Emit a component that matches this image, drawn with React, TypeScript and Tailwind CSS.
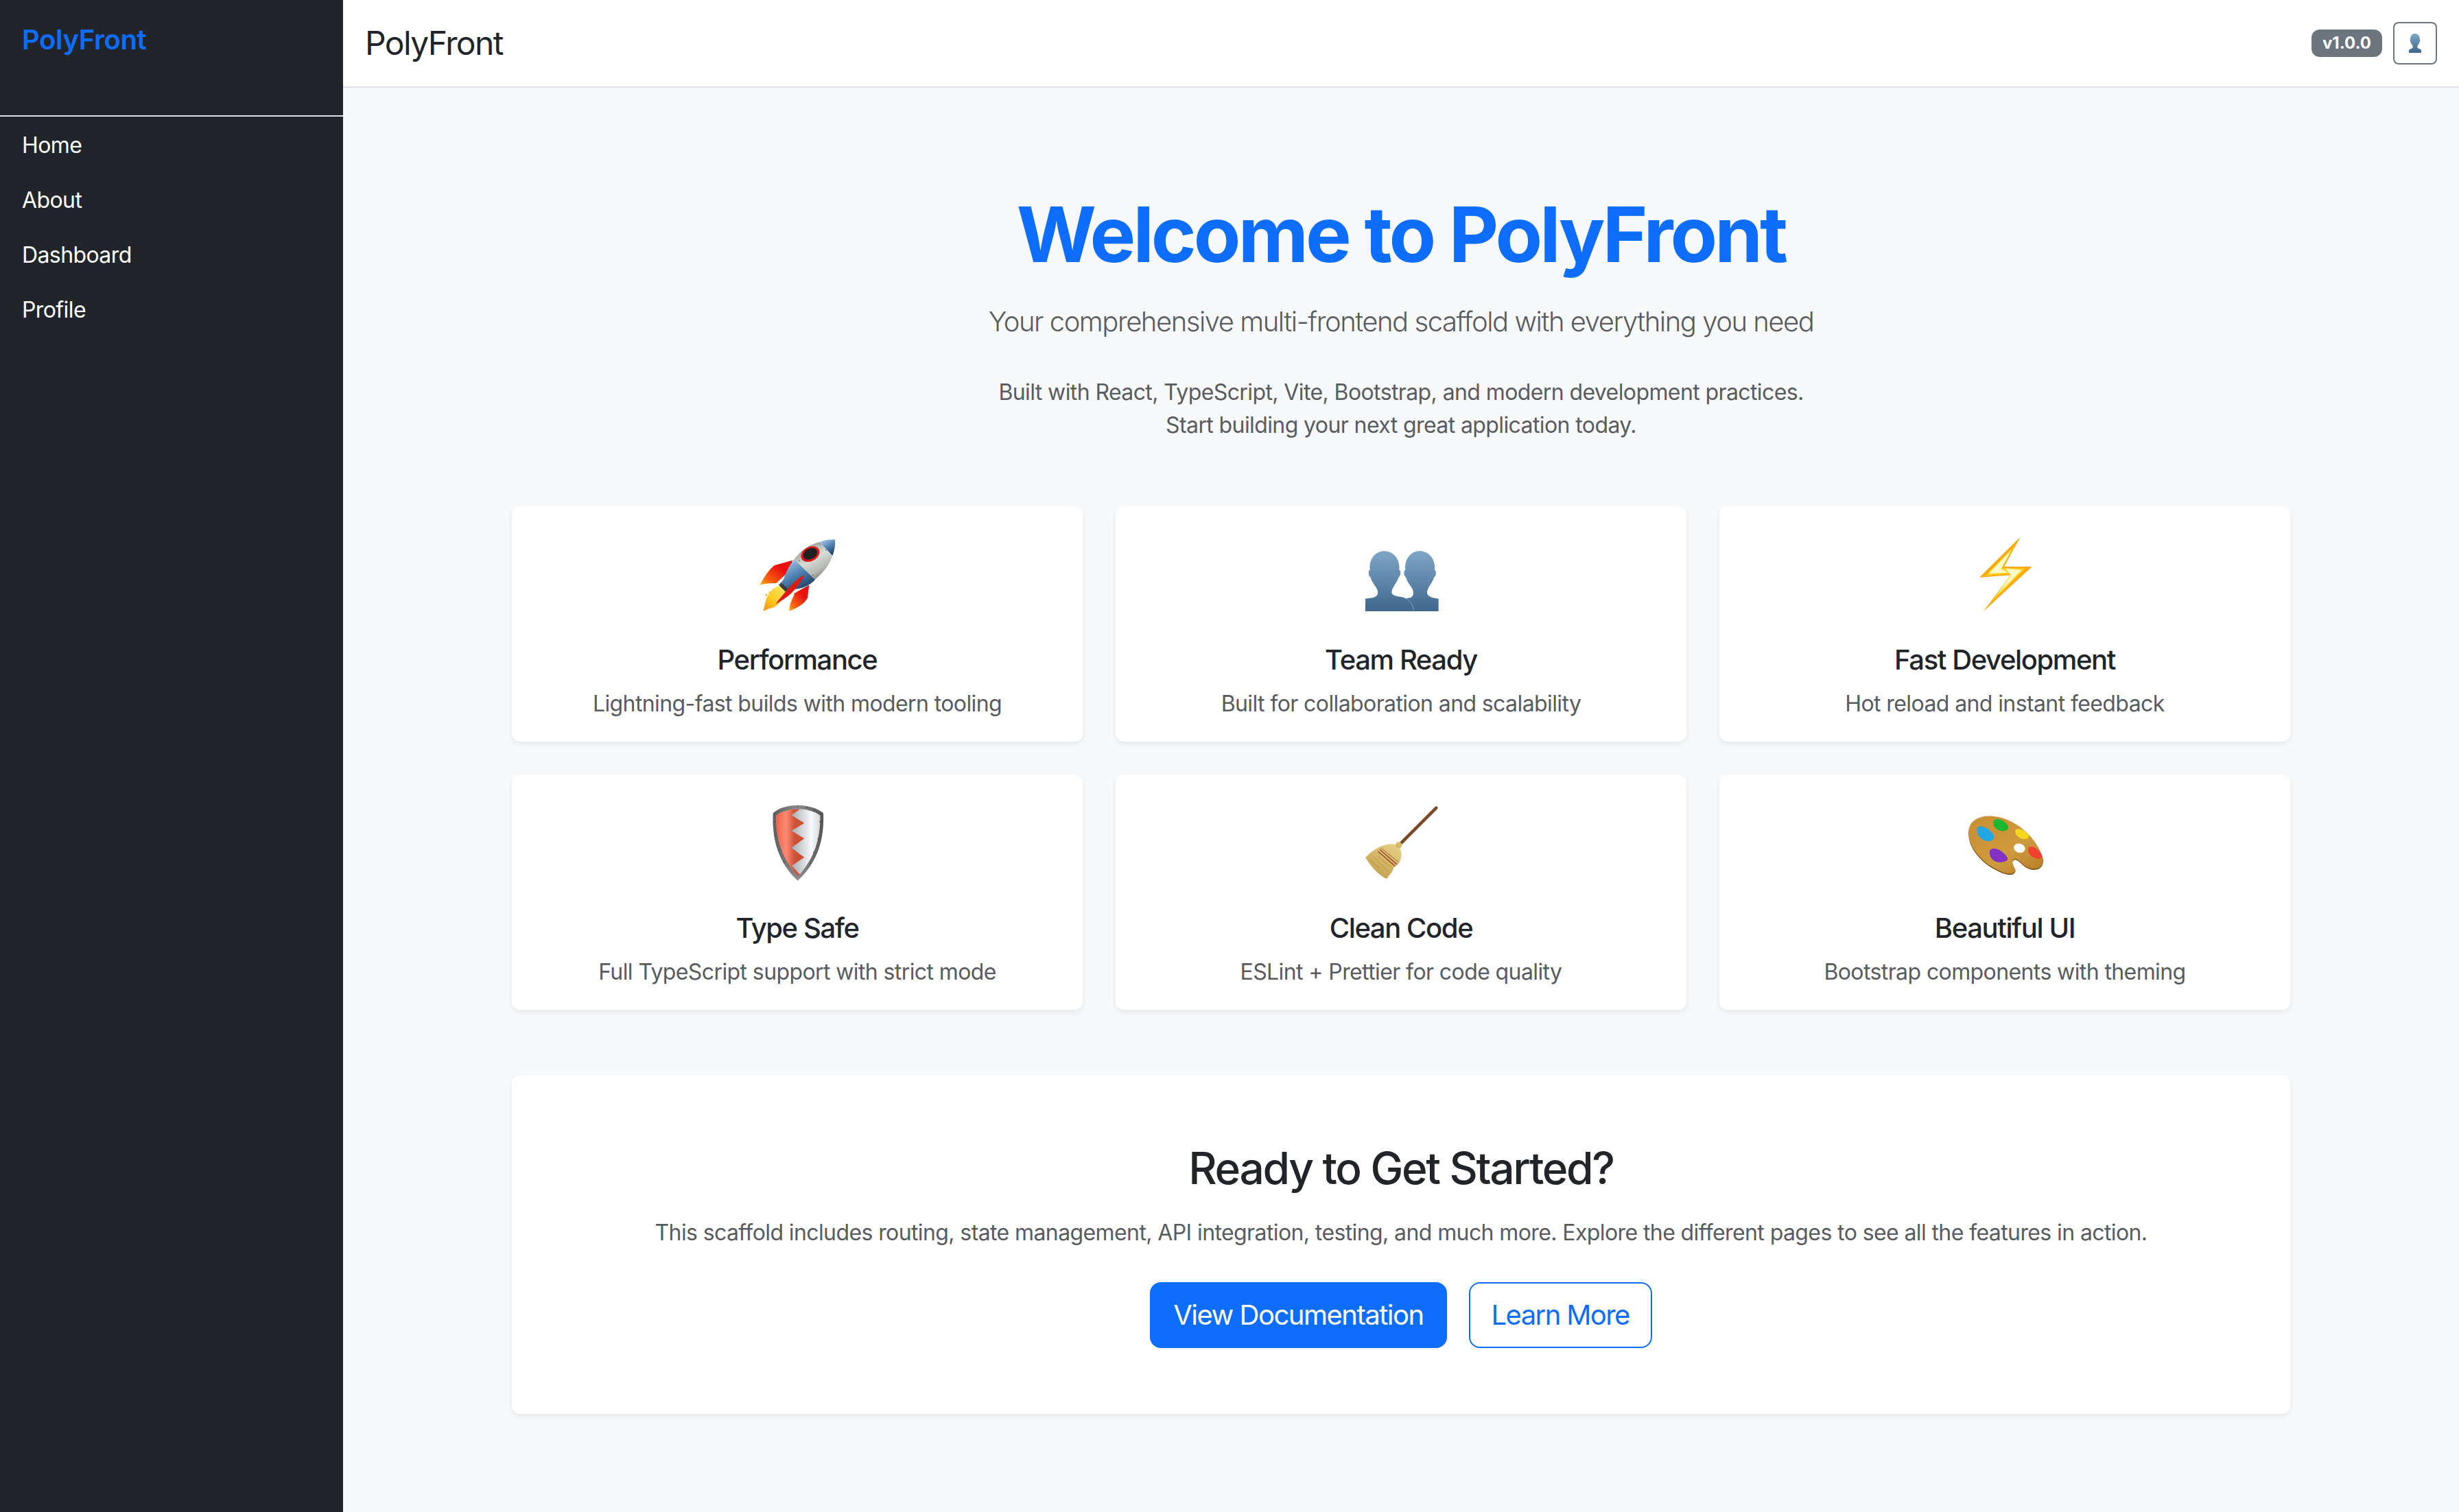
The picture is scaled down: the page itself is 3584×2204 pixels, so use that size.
import React from "react";

const bustA = "M177 393V338C205 335 232 335 232 310C232 290 205 270 200 245C190 240 188 215 197 212C192 160 225 130 260 130C295 130 330 160 325 212C334 215 332 240 322 245C315 270 292 290 292 310C292 330 335 328 350 335C375 345 388 370 388 393Z";
const bustB = "M345 393V338C375 335 387 335 387 310C387 290 360 270 355 245C345 240 343 215 352 212C347 160 380 130 415 130C450 130 485 160 480 212C489 215 487 240 477 245C470 270 447 290 447 310C447 330 470 335 497 338V393Z";

function Icon({ x, children }: { x: number; children: React.ReactNode }) {
  return (
    <svg className="block mx-auto w-[200px] h-[150px]" viewBox={`${x} 0 600 450`}>
      {children}
    </svg>
  );
}

const Rocket = () => (
  <Icon x={33}>
    <defs>
      <linearGradient id="rfin" x1="1" y1="0" x2="0" y2="1"><stop offset="0.35" stopColor="#e8110f" /><stop offset="0.8" stopColor="#fb6a10" /><stop offset="1" stopColor="#fdb515" /></linearGradient>
      <linearGradient id="rsil" x1="0.2" y1="0" x2="0.8" y2="1"><stop offset="0" stopColor="#83857f" /><stop offset="0.45" stopColor="#dadcd8" /><stop offset="0.75" stopColor="#b5b7b3" /><stop offset="1" stopColor="#60625f" /></linearGradient>
      <linearGradient id="rblu" x1="0.2" y1="0" x2="0.8" y2="1"><stop offset="0" stopColor="#a9cbe9" /><stop offset="0.5" stopColor="#4d7fb0" /><stop offset="1" stopColor="#1b3a5a" /></linearGradient>
      <linearGradient id="rfl" x1="1" y1="0" x2="0" y2="1"><stop offset="0" stopColor="#fff07a" /><stop offset="0.6" stopColor="#fdc91f" /><stop offset="1" stopColor="#f98c12" /></linearGradient>
    </defs>
    <path d="M312 170L232 193C205 215 185 250 170 278C205 268 225 272 242 270L300 215Z" fill="url(#rfin)" />
    <path d="M385 278L318 316C325 325 300 345 298 392C330 380 360 365 378 335Z" fill="url(#rfin)" />
    <path d="M262 282C235 285 215 300 205 325C192 345 192 370 184 393C205 380 235 380 252 360C265 345 290 320 298 298Z" fill="url(#rfl)" />
    <circle cx="198" cy="322" r="4" fill="#f9a215" /><circle cx="212" cy="310" r="3" fill="#f9a215" />
    <path d="M320 165C305 185 285 215 274 252L262 268C270 285 285 300 300 296C340 300 385 285 412 254Z" fill="url(#rblu)" />
    <path d="M262 268L252 278L282 308L294 296Z" fill="#3b3d3c" />
    <path d="M320 165C350 125 390 100 430 90L487 150C475 190 445 225 410 255Z" fill="url(#rsil)" />
    <path d="M430 90C455 80 480 78 498 80C500 105 495 130 487 150Z" fill="url(#rblu)" />
    <ellipse cx="390" cy="143" rx="43" ry="31" transform="rotate(-28 390 143)" fill="#d81818" />
    <ellipse cx="390" cy="142" rx="33" ry="23" transform="rotate(-28 390 142)" fill="#1f2022" />
    <path d="M365 235C345 240 300 280 238 362C270 345 300 325 325 295C340 275 355 255 365 235Z" fill="#de1a12" />
    <circle cx="342" cy="172" r="3" fill="#777" /><circle cx="432" cy="99" r="3" fill="#777" /><circle cx="458" cy="126" r="3" fill="#777" /><circle cx="402" cy="235" r="3" fill="#777" />
  </Icon>
);

const Team = () => (
  <Icon x={33}>
    <defs>
      <linearGradient id="bust" x1="0" y1="0" x2="0" y2="1"><stop offset="0" stopColor="#7ea6c6" /><stop offset="1" stopColor="#40678c" /></linearGradient>
    </defs>
    <path d={bustB} fill="url(#bust)" />
    <path d={bustA} fill="url(#bust)" />
    <path d="M350 335C375 345 388 370 388 393" fill="none" stroke="#9cc3dd" strokeWidth="2" />
  </Icon>
);

const Bolt = () => (
  <Icon x={3}>
    <path d="M372 67L192 245L330 235L208 395L422 198L300 198Z" fill="#fba90f" />
    <path d="M345 108L218 238L332 228L248 350L392 206L290 205Z" fill="#ffd21e" />
    <path d="M332 125L232 228L318 224L287 208Z" fill="#fffbc8" />
    <path d="M306 206L376 212L272 318L330 236Z" fill="#fffbc8" />
  </Icon>
);

const Shield = () => (
  <Icon x={33}>
    <defs>
      <linearGradient id="sred" x1="0" y1="0" x2="1" y2="0"><stop offset="0" stopColor="#ef6248" /><stop offset="0.35" stopColor="#fb8a75" /><stop offset="0.65" stopColor="#cf5237" /><stop offset="1" stopColor="#ca4f34" /></linearGradient>
      <linearGradient id="swht" x1="0" y1="0" x2="1" y2="0"><stop offset="0.35" stopColor="#a9acae" /><stop offset="0.8" stopColor="#f7f9fb" /><stop offset="1" stopColor="#d5d8da" /></linearGradient>
      <linearGradient id="sedg" x1="0" y1="0" x2="1" y2="0"><stop offset="0" stopColor="#5f5f5f" /><stop offset="0.5" stopColor="#8c8c8c" /><stop offset="1" stopColor="#555" /></linearGradient>
    </defs>
    <path d="M335 68C375 68 420 80 447 103C452 220 420 320 335 398C250 320 222 220 227 103C250 80 295 68 335 68Z" fill="url(#sedg)" />
    <path d="M337 85C370 85 410 95 433 113C436 215 405 305 337 378C268 305 238 215 241 113C265 95 305 85 337 85Z" fill="url(#swht)" />
    <path d="M345 85L308 112L364 146L308 180L364 214L307 254L364 296L309 333L345 372L337 378C268 305 238 215 241 113C265 95 305 85 345 85Z" fill="url(#sred)" />
    {[[232, 140], [238, 200], [252, 262], [276, 318], [432, 140], [440, 100], [424, 215], [405, 275], [392, 320], [335, 75], [375, 78], [405, 92]].map(([a, b]) => (
      <circle key={`${a}-${b}`} cx={a} cy={b} r="2.5" fill="#444" />
    ))}
  </Icon>
);

const Broom = () => (
  <Icon x={33}>
    <defs>
      <linearGradient id="straw" x1="0.8" y1="0" x2="0.2" y2="1"><stop offset="0" stopColor="#e8cf85" /><stop offset="1" stopColor="#c09c47" /></linearGradient>
    </defs>
    <line x1="487" y1="80" x2="335" y2="232" stroke="#7a4a28" strokeWidth="14" strokeLinecap="round" />
    <path d="M178 298C200 270 250 235 300 238C325 240 338 265 334 295C330 320 315 335 302 340C295 365 280 375 270 390C245 380 205 345 178 298Z" fill="url(#straw)" />
    <circle cx="323" cy="243" r="14" fill="#d8bb66" />
    <path d="M240 262L314 326M232 270L306 334" stroke="#8e3f25" strokeWidth="4" fill="none" />
    <path d="M246 255L320 316" stroke="#8e3f25" strokeWidth="3" fill="none" opacity="0.7" />
    <path d="M200 310L240 345M215 295L270 350M230 290L290 340" stroke="#a5842f" strokeWidth="2" fill="none" />
  </Icon>
);

const Palette = () => (
  <Icon x={3}>
    <defs>
      <linearGradient id="wood" x1="0" y1="0" x2="1" y2="1"><stop offset="0" stopColor="#c98f34" /><stop offset="0.6" stopColor="#cf9a3d" /><stop offset="1" stopColor="#b57c24" /></linearGradient>
    </defs>
    <path d="M145 180C150 135 190 112 250 116C340 122 440 200 470 300C475 335 450 350 420 345C385 340 375 310 350 302C325 305 340 335 350 350C345 375 310 372 270 350C200 315 140 250 145 180Z" fill="#7b5218" transform="translate(0 5)" />
    <path d="M145 180C150 135 190 112 250 116C340 122 440 200 470 300C475 335 450 350 420 345C385 340 375 310 350 302C325 305 340 335 350 350C345 375 310 372 270 350C200 315 140 250 145 180Z" fill="url(#wood)" />
    <ellipse cx="367" cy="256" rx="25" ry="20" transform="rotate(15 367 256)" fill="#fff" />
    <path d="M183 168C190 150 225 165 245 185C265 205 255 230 225 225C195 220 178 195 183 168Z" fill="#22a7e4" />
    <path d="M255 135C270 120 305 135 318 160C320 185 290 185 270 175C255 165 250 150 255 135Z" fill="#19b82e" />
    <path d="M350 175C365 165 395 180 408 200C410 220 385 218 370 212C355 205 345 190 350 175Z" fill="#f7d61e" />
    <path d="M407 255C420 240 450 260 465 285C470 310 440 305 425 295C410 285 402 270 407 255Z" fill="#ee4131" />
    <path d="M238 265C250 250 285 260 305 285C325 305 315 315 285 318C255 320 230 295 238 265Z" fill="#8231c4" />
  </Icon>
);

const features = [
  { icon: <Rocket />, title: "Performance", desc: "Lightning-fast builds with modern tooling" },
  { icon: <Team />, title: "Team Ready", desc: "Built for collaboration and scalability" },
  { icon: <Bolt />, title: "Fast Development", desc: "Hot reload and instant feedback" },
  { icon: <Shield />, title: "Type Safe", desc: "Full TypeScript support with strict mode" },
  { icon: <Broom />, title: "Clean Code", desc: "ESLint + Prettier for code quality" },
  { icon: <Palette />, title: "Beautiful UI", desc: "Bootstrap components with theming" },
];

export default function App() {
  return (
    <div className="flex h-[2204px] w-[3584px] overflow-hidden font-['Inter',sans-serif] text-[32px] leading-[48px] tracking-[-0.6px] text-[#212529] bg-[#f8f9fa]">
      <aside className="w-[500px] shrink-0 bg-[#212529]">
        <div className="h-[170px] px-[32px] pt-[28px] border-b-2 border-[#dee2e6]">
          <div className="text-[40px] leading-[60px] font-semibold tracking-[-0.4px] text-[#0d6efd]">PolyFront</div>
        </div>
        <nav className="flex flex-col pt-[2px]">
          {["Home", "About", "Dashboard", "Profile"].map((n) => (
            <a key={n} className="block px-[32px] py-[16px] text-white">{n}</a>
          ))}
        </nav>
      </aside>
      <div className="flex-1 flex flex-col min-w-0">
        <header className="h-[128px] shrink-0 bg-white border-b-2 border-[#dee2e6] flex items-center justify-between pl-[32px] pr-[32px]">
          <div className="text-[48px] leading-[58px] font-normal tracking-[-1.6px]">PolyFront</div>
          <div className="flex items-center gap-[16px]">
            <span className="h-[40px] px-[16px] flex items-center rounded-[12px] bg-[#6c757d] text-white text-[24px] leading-none font-bold tracking-normal">v1.0.0</span>
            <button className="w-[64px] h-[62px] flex items-center justify-center rounded-[8px] border-2 border-[#6c757d] bg-white">
              <svg className="w-[28px] h-[28px]" viewBox="177 130 168 263">
                <defs>
                  <linearGradient id="bust2" x1="0" y1="0" x2="0" y2="1"><stop offset="0" stopColor="#7ea6c6" /><stop offset="1" stopColor="#40678c" /></linearGradient>
                </defs>
                <path d="M177 393V350C205 335 232 335 232 310C232 290 205 270 200 245C190 240 188 215 197 212C192 160 225 130 260 130C295 130 330 160 325 212C334 215 332 240 322 245C315 270 292 290 292 310C292 335 320 335 345 350V393Z" fill="url(#bust2)" />
              </svg>
            </button>
          </div>
        </header>
        <main className="flex-1 flex flex-col items-center">
          <div className="w-[2592px]">
            <section className="text-center pt-[146px]">
              <h1 className="text-[112px] leading-[134px] font-bold text-[#0d6efd] tracking-[-3.9px]">Welcome to PolyFront</h1>
              <p className="mt-[31px] text-[40px] leading-[60px] font-light tracking-[-1.47px] text-[#595c5f]">Your comprehensive multi-frontend scaffold with everything you need</p>
              <p className="mt-[49px] text-[#595c5f]">
                Built with React, TypeScript, Vite, Bootstrap, and modern development practices.
                <br />
                Start building your next great application today.
              </p>
            </section>
            <section className="mt-[94px] grid grid-cols-3 gap-[48px]">
              {features.map((f) => (
                <div key={f.title} className="h-[343px] bg-white rounded-[12px] shadow-[0_4px_8px_rgba(0,0,0,0.075)] text-center pt-[22px]">
                  {f.icon}
                  <h5 className="mt-[28px] text-[40px] leading-[48px] font-[450] tracking-[-1.4px]">{f.title}</h5>
                  <p className="mt-[16px] text-[#595c5f]">{f.desc}</p>
                </div>
              ))}
            </section>
            <section className="mt-[95px] h-[494px] bg-white rounded-[12px] shadow-[0_4px_8px_rgba(0,0,0,0.075)] text-center pt-[97px]">
              <h2 className="text-[64px] leading-[77px] font-[450] tracking-[-2.3px]">Ready to Get Started?</h2>
              <p className="mt-[32px] text-[#595c5f]">This scaffold includes routing, state management, API integration, testing, and much more. Explore the different pages to see all the features in action.</p>
              <div className="mt-[48px] flex justify-center gap-[32px]">
                <a className="h-[96px] px-[32px] flex items-center rounded-[16px] bg-[#0d6efd] border-2 border-[#0d6efd] text-white text-[40px] tracking-[-1.5px]">View Documentation</a>
                <a className="h-[96px] px-[31px] flex items-center rounded-[16px] bg-white border-2 border-[#0d6efd] text-[#0d6efd] text-[40px] tracking-[-1.6px]">Learn More</a>
              </div>
            </section>
          </div>
        </main>
      </div>
    </div>
  );
}
